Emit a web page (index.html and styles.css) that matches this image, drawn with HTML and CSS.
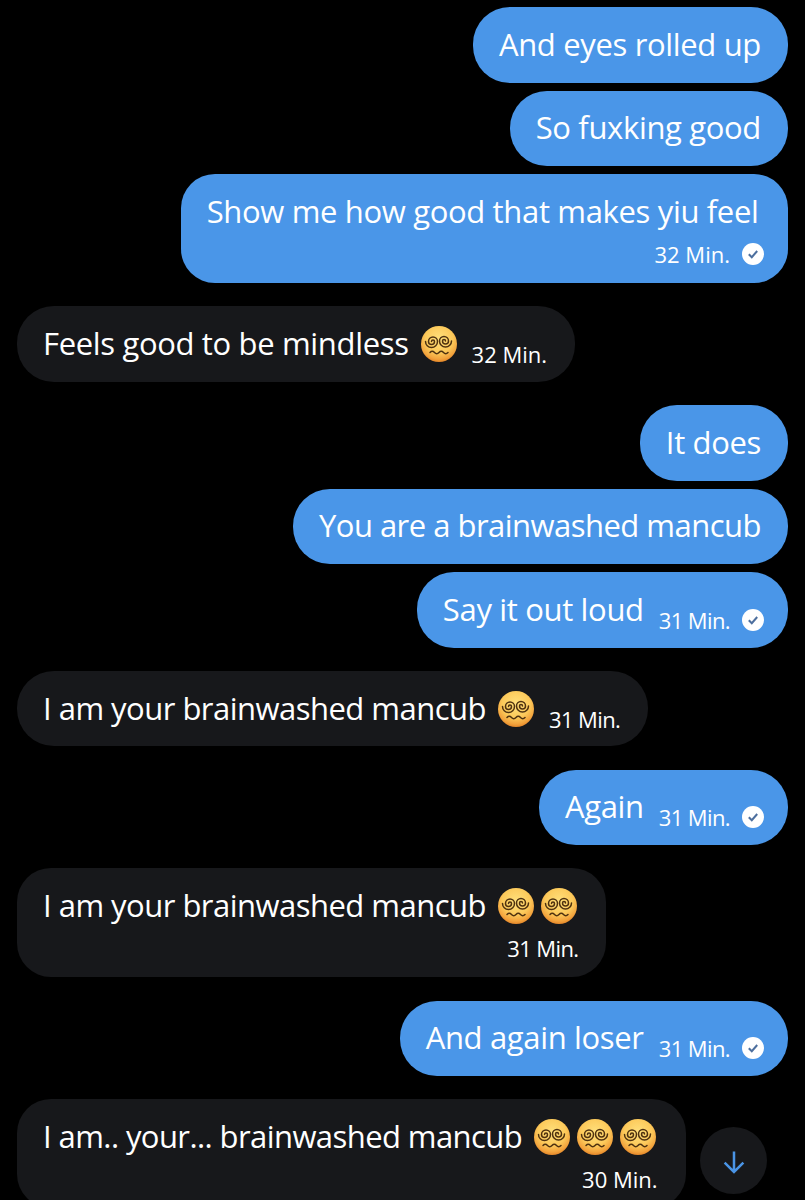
FILE: index.html
```html
<!DOCTYPE html>
<html lang="de">
<head>
<meta charset="utf-8">
<title>Messages</title>
<link rel="stylesheet" href="styles.css">
</head>
<body>
<svg class="defs" width="0" height="0" aria-hidden="true">
  <defs>
    <radialGradient id="face" cx="50%" cy="36%" r="66%">
      <stop offset="0%" stop-color="#ffe07c"/>
      <stop offset="58%" stop-color="#fcc95a"/>
      <stop offset="85%" stop-color="#f2a23c"/>
      <stop offset="100%" stop-color="#e07f24"/>
    </radialGradient>
    <symbol id="dizzy" viewBox="0 0 36 36">
      <circle cx="18" cy="18" r="18" fill="url(#face)"/>
      <g fill="none" stroke="#4f3210" stroke-width="1.5" stroke-linecap="round">
        <path d="M10.500 15.500a1.500 1.500 0 0 1 3 0a3 3 0 0 1-6 0a4.500 4.500 0 0 1 9 0a6 6 0 0 1-12 0"/>
        <path d="M24.500 15a1.500 1.500 0 0 0-3 0a3 3 0 0 0 6 0a4.500 4.500 0 0 0-9 0a6 6 0 0 0 12 0"/>
        <path d="M9 26.500c1.500-1.600 3-1.600 4.500 0s3 1.600 4.500 0 3-1.600 4.500 0 3 1.600 4.500 0"/>
      </g>
    </symbol>
    <symbol id="check" viewBox="0 0 22 22">
      <circle cx="11" cy="11" r="11" fill="#fff"/>
      <path d="M6.800 11.200l3 3 5.400-6.200" fill="none" stroke="#4d6f9e" stroke-width="2"/>
    </symbol>
  </defs>
</svg>
<main class="thread">
  <div class="group out">
    <div class="bubble"><span class="text">And eyes rolled up</span></div>
    <div class="bubble"><span class="text">So fuxking good</span></div>
    <div class="bubble stacked"><span class="text">Show me how good that makes yiu feel</span>
      <div class="meta"><span class="time">32 Min.</span><svg class="tick"><use href="#check"/></svg></div></div>
  </div>
  <div class="group in">
    <div class="bubble"><span class="text">Feels good to be mindless</span><svg class="emoji first"><use href="#dizzy"/></svg><span class="time">32 Min.</span></div>
  </div>
  <div class="group out">
    <div class="bubble"><span class="text">It does</span></div>
    <div class="bubble"><span class="text tight">You are a brainwashed mancub</span></div>
    <div class="bubble"><span class="text">Say it out loud</span><span class="time narrow">31 Min.</span><svg class="tick"><use href="#check"/></svg></div>
  </div>
  <div class="group in">
    <div class="bubble"><span class="text tight">I am your brainwashed mancub</span><svg class="emoji first"><use href="#dizzy"/></svg><span class="time narrow">31 Min.</span></div>
  </div>
  <div class="group out">
    <div class="bubble"><span class="text">Again</span><span class="time narrow">31 Min.</span><svg class="tick"><use href="#check"/></svg></div>
  </div>
  <div class="group in">
    <div class="bubble stacked">
      <div class="line"><span class="text tight">I am your brainwashed mancub</span><svg class="emoji first"><use href="#dizzy"/></svg><svg class="emoji"><use href="#dizzy"/></svg></div>
      <div class="meta"><span class="time narrow">31 Min.</span></div>
    </div>
  </div>
  <div class="group out">
    <div class="bubble"><span class="text">And again loser</span><span class="time narrow">31 Min.</span><svg class="tick"><use href="#check"/></svg></div>
  </div>
  <div class="group in">
    <div class="bubble stacked">
      <div class="line"><span class="text tighter">I am.. your... brainwashed mancub</span><svg class="emoji first"><use href="#dizzy"/></svg><svg class="emoji"><use href="#dizzy"/></svg><svg class="emoji"><use href="#dizzy"/></svg></div>
      <div class="meta"><span class="time">30 Min.</span></div>
    </div>
  </div>
</main>
<button class="scroll-down" type="button" aria-label="Nach unten">
  <svg class="arrow" viewBox="0 0 24 24"><path d="M12 3.500v16M4.500 12.500l7.500 7.500 7.500-7.500" fill="none" stroke="#4a94e6" stroke-width="2"/></svg>
</button>
</body>
</html>
```
FILE: styles.css
```css
* { box-sizing: border-box; }
html, body { margin: 0; height: 1200px; overflow: hidden; background: #000; }
body {
  position: relative;
  font-family: "Open Sans", "Liberation Sans", sans-serif;
  color: #fff;
}
.defs { position: absolute; }
.thread {
  display: flex;
  flex-direction: column;
  gap: 23.25px;
  padding: 7px 17px 0;
}
.group { display: flex; flex-direction: column; gap: 8px; }
.group.out { align-items: flex-end; }
.group.in { align-items: flex-start; }
.bubble {
  display: flex;
  align-items: center;
  height: 75.5px;
  padding: 0 27px 0 26px;
  border-radius: 37px;
  font-size: 31px;
  letter-spacing: -0.34px;
  line-height: 40px;
}
.out .bubble { background: #4a96e8; }
.in .bubble { background: #17181b; padding-right: 28px; }
.text { white-space: nowrap; margin-bottom: 2px; }
.text.tight { letter-spacing: -0.52px; }
.text.tighter { letter-spacing: -0.58px; }
.time {
  font-size: 22px;
  letter-spacing: 0;
  line-height: 28px;
  white-space: nowrap;
  margin: 20px 0 0 15px;
}
.time.narrow { letter-spacing: -0.6px; }
.tick { width: 22px; height: 22px; margin: 20px -3px 0 12px; flex: none; }
.emoji { width: 36px; height: 36px; flex: none; margin-left: 7px; }
.emoji.first { margin-left: 12px; }
.bubble.stacked {
  flex-direction: column;
  align-items: stretch;
  justify-content: flex-start;
  height: auto;
  min-height: 109px;
  padding-top: 17px;
  padding-bottom: 14px;
  padding-right: 29.5px;
  border-radius: 34px;
}
.line { display: flex; align-items: center; }
.meta { display: flex; justify-content: flex-end; align-items: center; margin-top: 7px; }
.meta .time { margin: 0; }
.meta .tick { margin: 0 -5.5px 0 12px; }
.in .meta { margin-right: -1.5px; }
.scroll-down {
  position: absolute;
  left: 700px;
  top: 1127px;
  width: 67px;
  height: 67px;
  display: flex;
  align-items: center;
  justify-content: center;
  padding: 2px 0 0;
  border: 0;
  border-radius: 50%;
  background: #17181b;
}
.arrow { width: 30px; height: 30px; }
```
